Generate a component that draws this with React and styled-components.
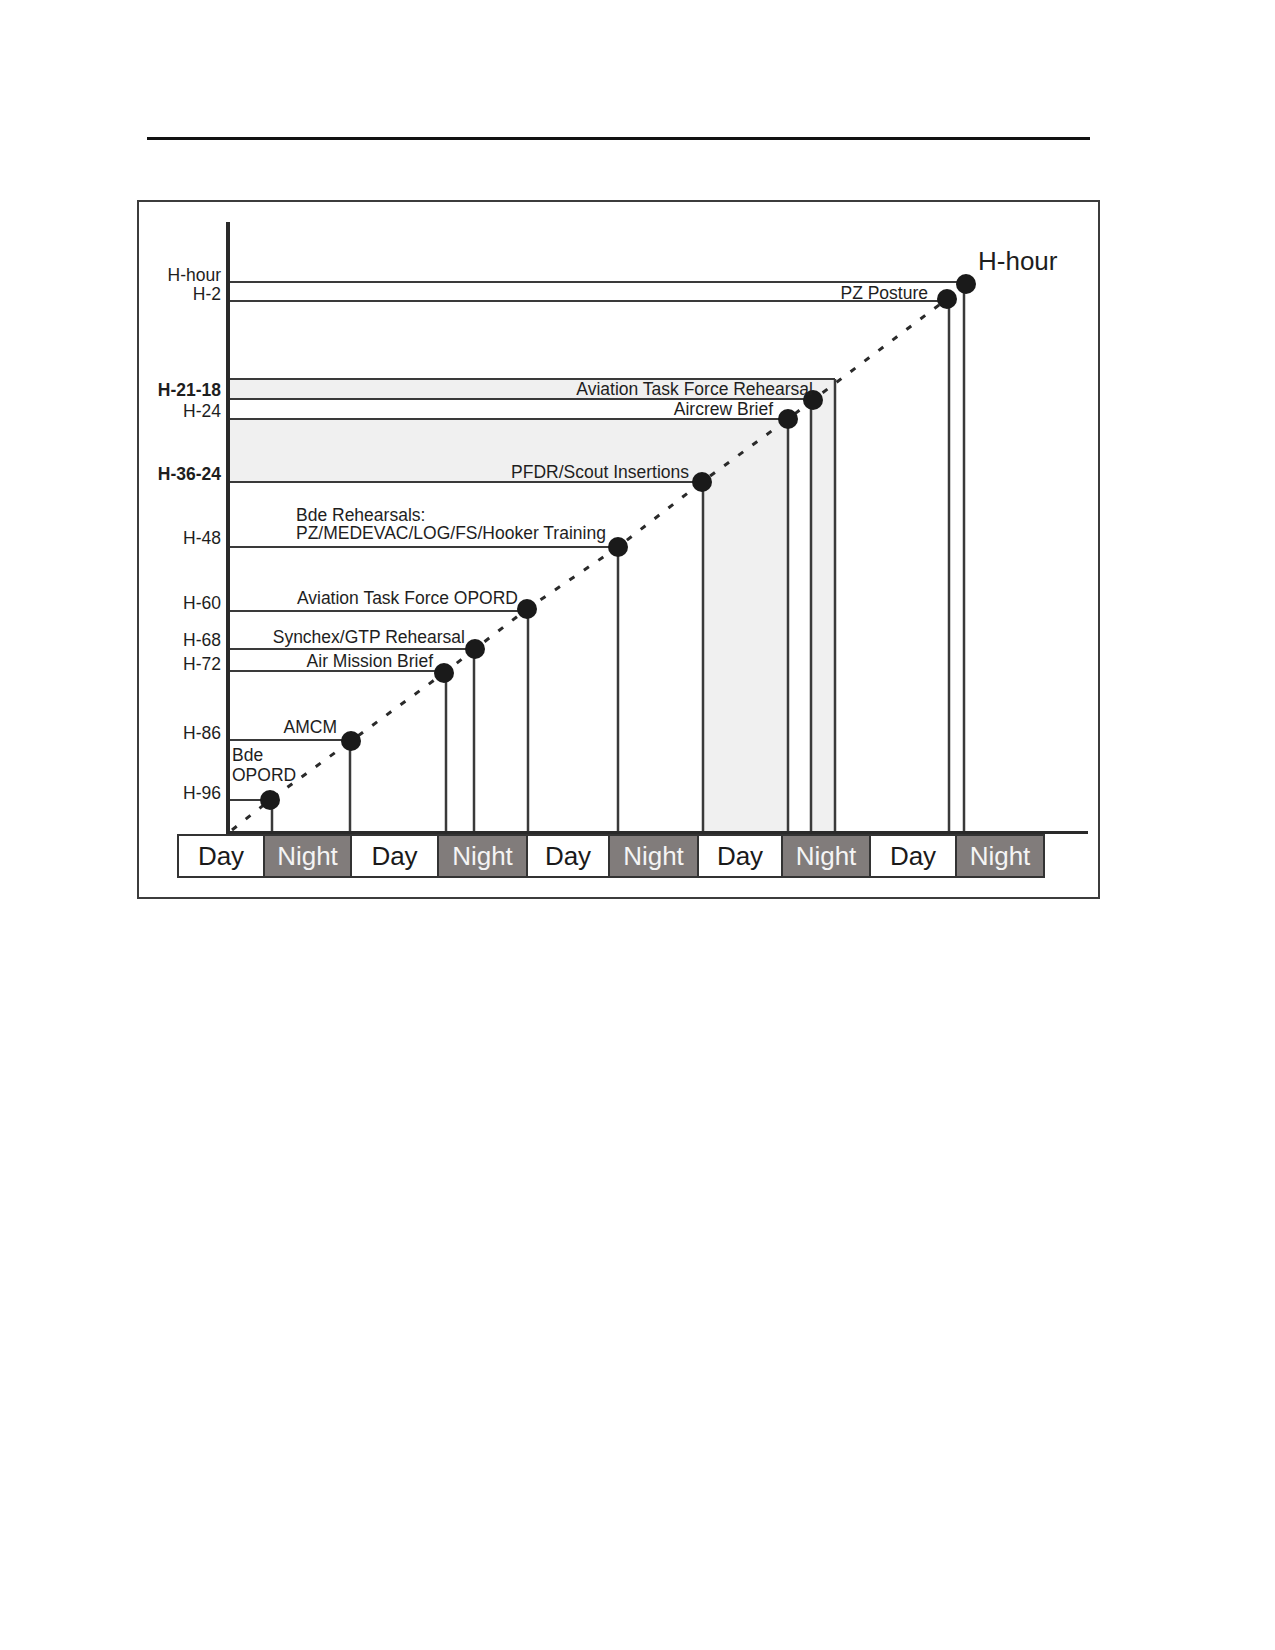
import React from 'react'
import styled, { createGlobalStyle } from 'styled-components'

const GlobalStyle = createGlobalStyle`
  html,
  body {
    margin: 0;
    padding: 0;
    background: #ffffff;
  }

  body {
    font-family: 'Liberation Sans', Arial, sans-serif;
  }
`

// chart coordinates are page pixels, the svg viewBox starts at the frame's inner corner
const FRAME_X = 139
const FRAME_Y = 202
const CHART_W = 959
const CHART_H = 632
const BASE_Y = 832

const axisLabels = [
  { text: 'H-hour', y: 281 },
  { text: 'H-2', y: 300 },
  { text: 'H-21-18', y: 396, bold: true },
  { text: 'H-24', y: 417 },
  { text: 'H-36-24', y: 480, bold: true },
  { text: 'H-48', y: 544 },
  { text: 'H-60', y: 609 },
  { text: 'H-68', y: 646 },
  { text: 'H-72', y: 670 },
  { text: 'H-86', y: 739 },
  { text: 'H-96', y: 799 }
]

// [y, x where the line stops]
const timeLines = [
  [282, 966],
  [301, 947],
  [379, 835],
  [399, 813],
  [419, 788],
  [482, 702],
  [547, 618],
  [611, 527],
  [649, 475],
  [671, 444],
  [740, 351],
  [800, 270]
]

// [x, y where the drop line starts]
const dropLines = [
  [964, 284],
  [949, 299],
  [835, 379],
  [811, 400],
  [788, 419],
  [703, 482],
  [618, 547],
  [528, 609],
  [474, 649],
  [446, 673],
  [350, 741],
  [272, 800]
]

const milestones = [
  [270, 800],
  [351, 741],
  [444, 673],
  [475, 649],
  [527, 609],
  [618, 547],
  [702, 482],
  [788, 419],
  [813, 400],
  [947, 299],
  [966, 284]
]

const eventLabels = [
  { text: 'PZ Posture', x: 928, y: 299, anchor: 'end' },
  { text: 'Aviation Task Force Rehearsal', x: 813, y: 395, anchor: 'end' },
  { text: 'Aircrew Brief', x: 773, y: 415, anchor: 'end' },
  { text: 'PFDR/Scout Insertions', x: 689, y: 478, anchor: 'end' },
  { text: 'Bde Rehearsals:', x: 296, y: 521, anchor: 'start' },
  { text: 'PZ/MEDEVAC/LOG/FS/Hooker Training', x: 296, y: 539, anchor: 'start' },
  { text: 'Aviation Task Force OPORD', x: 518, y: 604, anchor: 'end' },
  { text: 'Synchex/GTP Rehearsal', x: 465, y: 643, anchor: 'end' },
  { text: 'Air Mission Brief', x: 433, y: 667, anchor: 'end' },
  { text: 'AMCM', x: 337, y: 733, anchor: 'end' },
  { text: 'Bde', x: 232, y: 761, anchor: 'start' },
  { text: 'OPORD', x: 232, y: 781, anchor: 'start' }
]

const periods = [
  { name: 'Day', width: 86 },
  { name: 'Night', width: 87 },
  { name: 'Day', width: 87 },
  { name: 'Night', width: 89 },
  { name: 'Day', width: 82 },
  { name: 'Night', width: 89 },
  { name: 'Day', width: 84 },
  { name: 'Night', width: 88 },
  { name: 'Day', width: 86 },
  { name: 'Night', width: 88 }
]

const Page = styled.div`
  width: 1275px;
  min-height: 1650px;
  padding-top: 137px;
  box-sizing: border-box;
  background: #ffffff;
`

const Rule = styled.div`
  margin-left: 147px;
  width: 943px;
  height: 3px;
  background: #111111;
`

const Figure = styled.div`
  margin: 60px 0 0 137px;
  width: 963px;
  box-sizing: border-box;
  border: 2px solid #3c3c3c;
  padding-bottom: 19px;
`

const Chart = styled.svg`
  display: block;
  width: ${CHART_W}px;
  height: ${CHART_H}px;
`

const AxisLabel = styled.text`
  font-family: 'Liberation Sans', Arial, sans-serif;
  font-size: 17.5px;
  font-weight: ${(props) => (props.$bold ? 700 : 400)};
  fill: #1e1e1e;
`

const EventLabel = styled.text`
  font-family: 'Liberation Sans', Arial, sans-serif;
  font-size: 17.5px;
  fill: #1e1e1e;
`

const HourLabel = styled.text`
  font-family: 'Liberation Sans', Arial, sans-serif;
  font-size: 26px;
  fill: #1e1e1e;
`

const DayNightRow = styled.div`
  display: flex;
  margin-left: 38px;
  height: 44px;
  box-sizing: border-box;
  border-top: 2px solid #333333;
  border-bottom: 2px solid #333333;
  border-left: 2px solid #333333;
  width: max-content;
`

const PeriodCell = styled.div`
  display: flex;
  align-items: center;
  justify-content: center;
  box-sizing: border-box;
  border-right: 2px solid #333333;
  font-family: 'Liberation Sans', Arial, sans-serif;
  font-size: 26px;
  line-height: 1;
  background: ${(props) => (props.$night ? '#817c7b' : '#ffffff')};
  color: ${(props) => (props.$night ? '#f4f4f4' : '#1a1a1a')};
`

const dashPath = [[232, 830], ...milestones.slice(0, 10)]
  .map(([x, y], i) => `${i === 0 ? 'M' : 'L'}${x} ${y}`)
  .join(' ')

const Timeline = () => (
  <Chart viewBox={`${FRAME_X} ${FRAME_Y} ${CHART_W} ${CHART_H}`}>
    {/* shaded windows */}
    <g fill="#f0f0f0">
      <rect x={230} y={379} width={605} height={20} />
      <rect x={811} y={399} width={24} height={BASE_Y - 399} />
      <rect x={230} y={419} width={558} height={63} />
      <rect x={703} y={482} width={85} height={BASE_Y - 482} />
    </g>

    <g stroke="#3a3a3a" strokeWidth={2}>
      {timeLines.map(([y, x]) => (
        <line key={`h${y}`} x1={228} y1={y} x2={x} y2={y} />
      ))}
      {dropLines.map(([x, y]) => (
        <line key={`v${x}`} x1={x} y1={y} x2={x} y2={BASE_Y} strokeWidth={2.5} />
      ))}
    </g>

    <path
      d={dashPath}
      fill="none"
      stroke="#2a2a2a"
      strokeWidth={3}
      strokeDasharray="6 11.5"
    />

    <g fill="#1a1a1a">
      {milestones.map(([x, y]) => (
        <circle key={`d${x}`} cx={x} cy={y} r={10} />
      ))}
    </g>

    {/* axes */}
    <rect x={226} y={222} width={4} height={BASE_Y - 220} fill="#2a2a2a" />
    <rect x={226} y={831} width={862} height={4} fill="#2a2a2a" />

    {axisLabels.map((l) => (
      <AxisLabel key={l.text} x={221} y={l.y} textAnchor="end" $bold={l.bold}>
        {l.text}
      </AxisLabel>
    ))}

    {eventLabels.map((l) => (
      <EventLabel key={l.text} x={l.x} y={l.y} textAnchor={l.anchor}>
        {l.text}
      </EventLabel>
    ))}

    <HourLabel x={978} y={270}>
      H-hour
    </HourLabel>
  </Chart>
)

const App = () => (
  <Page>
    <GlobalStyle />
    <Rule />
    <Figure>
      <Timeline />
      <DayNightRow>
        {periods.map((p, i) => (
          <PeriodCell
            key={i}
            $night={p.name === 'Night'}
            style={{ width: p.width }}
          >
            {p.name}
          </PeriodCell>
        ))}
      </DayNightRow>
    </Figure>
  </Page>
)

export default App
